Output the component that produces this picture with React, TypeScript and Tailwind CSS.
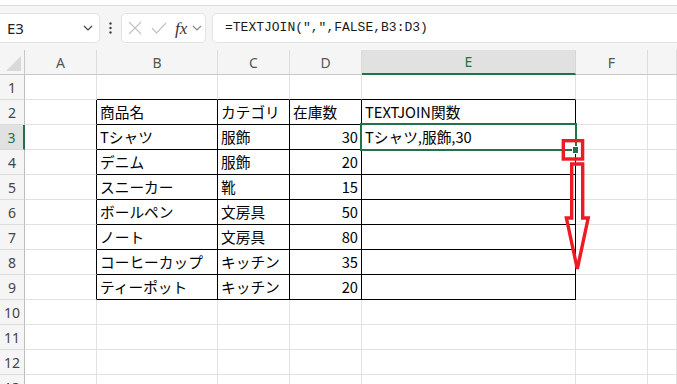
import React from "react";

const COLS = ["A", "B", "C", "D", "E", "F", ""];
const WIDTHS = ["w-[72px]", "w-[121px]", "w-[72px]", "w-[72px]", "w-[214px]", "w-[72px]", "flex-1"];

const DATA: Record<number, string[]> = {
  2: ["", "商品名", "カテゴリ", "在庫数", "TEXTJOIN関数"],
  3: ["", "Tシャツ", "服飾", "30", "Tシャツ,服飾,30"],
  4: ["", "デニム", "服飾", "20", ""],
  5: ["", "スニーカー", "靴", "15", ""],
  6: ["", "ボールペン", "文房具", "50", ""],
  7: ["", "ノート", "文房具", "80", ""],
  8: ["", "コーヒーカップ", "キッチン", "35", ""],
  9: ["", "ティーポット", "キッチン", "20", ""],
};

const ROWS = Array.from({ length: 13 }, (_, i) => i + 1);

function Chevron({ className }: { className?: string }) {
  return (
    <svg width="10" height="6" viewBox="0 0 10 6" className={className}>
      <path d="M1 1 L5 5 L9 1" fill="none" stroke="currentColor" strokeWidth="1.2" />
    </svg>
  );
}

function FormulaBar() {
  return (
    <div className="flex items-center h-[44px] bg-[#f5f5f5] pr-0">
      {/* Name box */}
      <div className="flex items-center justify-between w-[100px] h-[30px] bg-white border border-[#e3e3e3] border-l-0 rounded-r-[5px] pl-[7px] pr-[6px]">
        <span className="text-[15px] text-[#222] font-['Noto_Sans',sans-serif]">E3</span>
        <Chevron className="text-[#444]" />
      </div>
      <div className="w-[21px] flex justify-center">
        <svg width="3" height="12" viewBox="0 0 3 12">
          <circle cx="1.5" cy="1.5" r="1.2" fill="#444" />
          <circle cx="1.5" cy="6" r="1.2" fill="#444" />
          <circle cx="1.5" cy="10.5" r="1.2" fill="#444" />
        </svg>
      </div>
      {/* Cancel / enter / fx */}
      <div className="flex items-center w-[85px] h-[30px] bg-white border border-[#e3e3e3] rounded-[5px] pl-[6px]">
        <svg width="14" height="14" viewBox="0 0 14 14" className="ml-[0px]">
          <path d="M1 1 L13 13 M13 1 L1 13" stroke="#c4c4c4" strokeWidth="1.2" />
        </svg>
        <svg width="16" height="12" viewBox="0 0 16 12" className="ml-[9px]">
          <path d="M1 6 L5.5 11 L15 1" fill="none" stroke="#c4c4c4" strokeWidth="1.2" />
        </svg>
        <span className="ml-[8px] text-[17px] leading-none italic text-[#333] font-['Liberation_Serif',serif]">fx</span>
        <Chevron className="ml-[5px] text-[#888]" />
      </div>
      {/* Formula input */}
      <div className="flex items-center flex-1 h-[30px] ml-[6px] bg-white border border-[#e3e3e3] border-r-0 rounded-l-[5px] pl-[12px]">
        <span className="text-[13px] text-[#1a1a1a] font-['Liberation_Mono',monospace]">=TEXTJOIN(",",FALSE,B3:D3)</span>
      </div>
    </div>
  );
}

function cellClass(r: number, c: number) {
  const right = r >= 2 && r <= 9 && c <= 4 ? "border-r-black" : "border-r-[#e1e1e1]";
  const bottom = r <= 9 && c >= 1 && c <= 4 ? "border-b-black" : "border-b-[#e1e1e1]";
  const align = r >= 3 && c === 3 ? "justify-end pr-[3px]" : "justify-start pl-[3px]";
  return `${WIDTHS[c]} h-full flex items-center shrink-0 border-r border-b ${right} ${bottom} ${align}`;
}

function Sheet() {
  return (
    <div className="relative flex-1 overflow-hidden bg-white">
      {/* Column header */}
      <div className="flex h-[25px] bg-[#f5f5f5] font-['Noto_Sans',sans-serif] text-[14px] text-[#555]">
        <div className="w-[25px] h-full shrink-0 border-r border-b border-r-[#c8c8c8] border-b-[#c8c8c8] flex items-end justify-end pr-[3px] pb-[3px]">
          <svg width="15" height="15" viewBox="0 0 15 15">
            <polygon points="15,0 15,15 0,15" fill="#d9d9d9" />
          </svg>
        </div>
        {COLS.map((col, c) =>
          col === "E" ? (
            <div key={c} className={`${WIDTHS[c]} h-full shrink-0 flex items-center justify-center bg-[#e1e1e1] border-r border-r-[#d6d6d6] border-b-2 border-b-[#217346] text-[#217346]`}>
              {col}
            </div>
          ) : (
            <div key={c} className={`${WIDTHS[c]} h-full shrink-0 flex items-center justify-center border-r border-b border-r-[#dcdcdc] border-b-[#c8c8c8]`}>
              {col}
            </div>
          )
        )}
      </div>

      {/* Rows */}
      {ROWS.map((r) => {
        const vals = DATA[r] || [];
        return (
          <div key={r} className="flex h-[25px]">
            {r === 3 ? (
              <div className="w-[25px] h-full shrink-0 flex items-center justify-center bg-[#e1e1e1] border-r-2 border-r-[#217346] border-b border-b-[#d6d6d6] text-[14px] text-[#217346] font-['Noto_Sans',sans-serif]">
                {r}
              </div>
            ) : (
              <div className="w-[25px] h-full shrink-0 flex items-center justify-center bg-[#f5f5f5] border-r border-b border-r-[#bdbdbd] border-b-[#dcdcdc] text-[14px] text-[#444] font-['Noto_Sans',sans-serif]">
                {r}
              </div>
            )}
            {COLS.map((_, c) => (
              <div key={c} className={cellClass(r, c)}>
                <span className="text-[14.7px] leading-none text-black whitespace-nowrap font-['Noto_Sans_CJK_JP',sans-serif]">
                  {vals[c] || ""}
                </span>
              </div>
            ))}
          </div>
        );
      })}

      {/* Selection on E3 */}
      <div className="absolute left-[360px] top-[73px] w-[217px] h-[28px] border-2 border-[#217346]" />
      <div className="absolute left-[572px] top-[96px] w-[7px] h-[8px] bg-white" />
      <div className="absolute left-[573px] top-[97px] w-[5px] h-[6px] bg-[#217346]" />
    </div>
  );
}

export default function App() {
  return (
    <div className="relative w-[677px] h-[384px] overflow-hidden flex flex-col bg-white">
      <div className="h-[6px] shrink-0 bg-white border-b border-[#dadada]" />
      <FormulaBar />
      <Sheet />

      {/* Red annotation: fill handle box and drag arrow */}
      <svg className="absolute left-0 top-0 pointer-events-none" width="677" height="384" viewBox="0 0 677 384">
        <rect x="563.3" y="140.7" width="19.3" height="18.3" fill="none" stroke="#ed1c24" strokeWidth="3.4" />
        <polygon
          points="571.7,164 582.7,164 582.7,218 588.2,218 577.3,269 566.4,218 571.7,218"
          fill="none"
          stroke="#ed1c24"
          strokeWidth="3.4"
          strokeLinejoin="miter"
        />
      </svg>
    </div>
  );
}
